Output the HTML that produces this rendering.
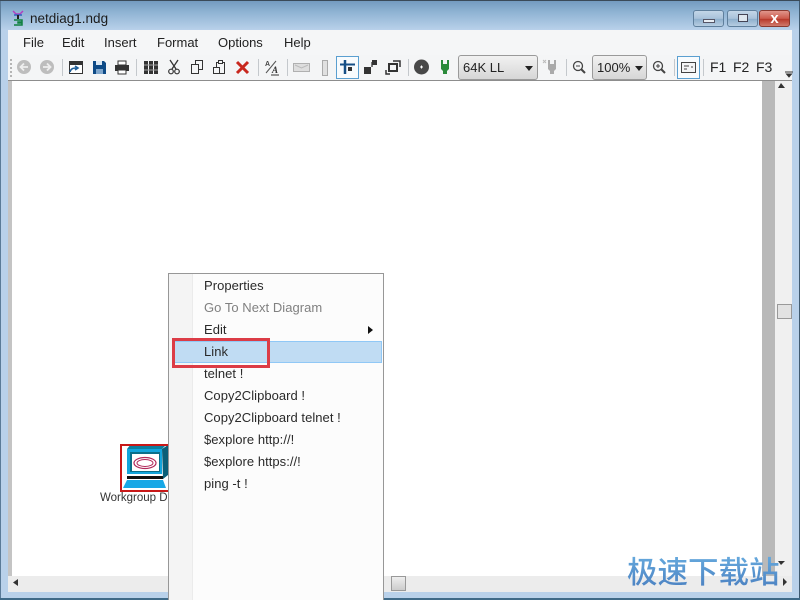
<!DOCTYPE html>
<html><head><meta charset="utf-8">
<style>
html,body{margin:0;padding:0;width:800px;height:600px;overflow:hidden;background:#b9d1ea}
body{position:relative;font-family:"Liberation Sans","Noto Sans CJK SC",sans-serif;color:#222}
div,span{position:absolute;box-sizing:border-box}
.t{white-space:nowrap;font-size:13px;line-height:16px}
.m{white-space:nowrap;font-size:13px;line-height:16px;left:204px;color:#2a2a2a;letter-spacing:.04px}
.btn{top:10px;height:17px;border:1px solid #5f7f9c;border-radius:3px;background:linear-gradient(#c3d6e8,#a9c2da 50%,#8fb0cd 55%,#b6cde2)}
</style></head><body>
<div style="left:0;top:0;width:800px;height:30px;background:linear-gradient(#7199bd,#8fb3d3 40%,#b9d1ea)"></div>
<div style="left:0;top:0;width:800px;height:1px;background:#3a4a58"></div>
<div style="left:0;top:1px;width:1px;height:599px;background:#5b7b98"></div>
<div style="left:799px;top:1px;width:1px;height:599px;background:#3f5a70"></div>
<div style="left:0;top:598px;width:800px;height:2px;background:#3f6a88"></div>
<div style="left:8px;top:30px;width:784px;height:25px;background:#f5f6f7"></div>
<div style="left:8px;top:55px;width:784px;height:26px;background:#f4f5f6"></div>
<div style="left:8px;top:80px;width:784px;height:1px;background:#8d8d8d"></div>
<div style="left:8px;top:81px;width:4px;height:495px;background:#c4c4c4"></div>
<div style="left:12px;top:81px;width:750px;height:495px;background:#fff"></div>
<div style="left:762px;top:81px;width:13px;height:495px;background:#b9b9b9"></div>
<div style="left:775px;top:81px;width:17px;height:495px;background:#f0f0f0"></div>
<div style="left:777px;top:304px;width:15px;height:15px;border:1px solid #999;background:#e2e2e2"></div>
<div style="left:8px;top:576px;width:784px;height:16px;background:#ececec"></div>
<div style="left:391px;top:576px;width:15px;height:15px;border:1px solid #999;background:linear-gradient(#eee,#ccc)"></div>

<svg style="position:absolute;left:0;top:0" width="800" height="600" viewBox="0 0 800 600">
<path d="M13 11l3 3h4l3-3" fill="none" stroke="#b040c0" stroke-width="1.500"/>
<path d="M14 15h8" stroke="#3060c0" stroke-width="1.500"/><path d="M18 15v4" stroke="#222" stroke-width="2"/>
<path d="M14 20h8v2h-4v1h4v2h-8" fill="none" stroke="#108040" stroke-width="1.500"/>
<path d="M11 59v18" stroke="#b5b5b5" stroke-width="2" stroke-dasharray="2 2"/>
<path d="M785 72h8M786.500 74h5l-2.500 3z" stroke="#333" fill="#333" stroke-width="1"/>
<circle cx="24" cy="67" r="7" fill="#bdbdbd"/><path d="M28 67h-7M24 63.500l-3.500 3.500 3.500 3.500" fill="none" stroke="#eee" stroke-width="1.800"/>
<circle cx="47" cy="67" r="7" fill="#bdbdbd"/><path d="M43 67h7M47 63.500l3.500 3.500-3.500 3.500" fill="none" stroke="#eee" stroke-width="1.800"/>
<path d="M62.500 59v17M136.500 59v17M258.500 59v17M287.500 59v17M408.500 59v17M566.500 59v17M674.500 59v17M703.500 59v17" stroke="#c4c8cc"/>
<rect x="69.500" y="61.500" width="13" height="12" fill="#fff" stroke="#333"/><path d="M69 62h14v3H69z" fill="#333"/>
<path d="M70 72c1-4 4-4 7-4M75 66l3 2-3 2" fill="none" stroke="#1f5f99" stroke-width="1.600"/>
<path d="M93 61h11l2 2v11H93z" fill="#0e4a86"/><rect x="96" y="61" width="6" height="4" fill="#dce8f3"/><rect x="96" y="69" width="7" height="5" fill="#7fa6cc"/>
<rect x="118" y="61" width="8" height="4" fill="#fff" stroke="#333"/><rect x="115" y="65" width="14" height="6" fill="#333"/><rect x="118" y="70" width="8" height="4" fill="#fff" stroke="#333"/>
<g fill="#333"><rect x="144" y="61" width="4" height="13"/><rect x="149" y="61" width="4" height="13"/><rect x="154" y="61" width="4" height="13"/></g>
<path d="M144 65h14M144 70h14" stroke="#a0a0a0"/>
<path d="M170 60l6 9M178 60l-6 9" stroke="#333" stroke-width="1.300" fill="none"/><circle cx="171" cy="71.500" r="2.300" fill="none" stroke="#333" stroke-width="1.200"/><circle cx="177" cy="71.500" r="2.300" fill="none" stroke="#333" stroke-width="1.200"/>
<rect x="195.500" y="60.500" width="7" height="9" fill="#f4f5f6" stroke="#333"/><rect x="191.500" y="64.500" width="7" height="9" fill="#f4f5f6" stroke="#333"/>
<rect x="216.500" y="62.500" width="8" height="11" fill="#f4f5f6" stroke="#333"/><rect x="218.500" y="60.500" width="4" height="3" fill="#f4f5f6" stroke="#333"/><rect x="213.500" y="67.500" width="6" height="6" fill="#f4f5f6" stroke="#333"/>
<path d="M237 62l11 11M248 62l-11 11" stroke="#c8281e" stroke-width="3"/>
<text x="265" y="66" font-size="7" font-family="Liberation Sans" font-weight="bold" fill="#444">A</text>
<text x="272" y="73" font-size="9" font-family="Liberation Serif" font-weight="bold" font-style="italic" fill="#333">A</text>
<path d="M266 73l10-12" stroke="#555"/><path d="M271 75h8" stroke="#333"/>
<rect x="293.500" y="63.500" width="16" height="8" fill="#dedede" stroke="#b0b0b0"/><path d="M295 65l6.500 3 6.500-3" fill="none" stroke="#bbb"/>
<rect x="322.500" y="60.500" width="5" height="15" fill="#e0e0e0" stroke="#aaa"/>
<rect x="336.500" y="56.500" width="22" height="22" fill="#f8fbfd" stroke="#5a9fd0"/>
<path d="M340 64.500h15" stroke="#164f86" stroke-width="2"/><path d="M345 60v14" stroke="#164f86" stroke-width="2.500"/><rect x="348" y="67" width="4" height="4" fill="#333"/>
<g fill="#333"><rect x="364" y="67" width="7" height="7"/><rect x="371" y="62" width="2" height="5" fill="#777"/><rect x="372" y="60" width="5" height="5"/></g>
<rect x="389" y="64" width="8" height="7" fill="none" stroke="#333" stroke-width="2"/><path d="M393 61h7v6" fill="none" stroke="#333" stroke-width="1.500"/><path d="M386 70v4h4" fill="none" stroke="#333" stroke-width="1.500"/>
<circle cx="421.500" cy="67" r="7.500" fill="#484848"/><path d="M420 67h3M421.500 65.500v3" stroke="#fff"/>
<path d="M442 60v4M448 60v4" stroke="#2a8a3a" stroke-width="2"/><path d="M441 64h8v5l-2 2v3h-4v-3l-2-2z" fill="#2a8a3a"/>
<path d="M549 60v4M555 60v4" stroke="#aaa" stroke-width="2"/><path d="M548 64h8v5l-2 2v3h-4v-3l-2-2z" fill="#aaa"/><path d="M543 60l3 3M546 60l-3 3" stroke="#bbb"/>
<circle cx="578" cy="66" r="4.500" fill="none" stroke="#444" stroke-width="1.300"/><path d="M576 66h4" stroke="#444"/><path d="M581 69l4 4" stroke="#444" stroke-width="2"/>
<circle cx="658" cy="66" r="4.500" fill="none" stroke="#444" stroke-width="1.300"/><path d="M656 66h4M658 64v4" stroke="#444"/><path d="M661 69l4 4" stroke="#444" stroke-width="2"/>
<rect x="677.500" y="56.500" width="22" height="22" fill="#f8fbfd" stroke="#5a9fd0"/>
<rect x="681.500" y="62.500" width="14" height="10" fill="#f4f5f6" stroke="#444"/><path d="M684 66h5M684 69h3M691 67h2" stroke="#444"/>
<path d="M781 83l-3 5h7z M18 579v7l-5-3.500z" fill="#333"/>
<path d="M781 565l-3-4h7z M783 578v8l4-4z" fill="#333"/>
<path d="M127 449h35l4-4v-1h-35z" fill="#0c7fa0"/>
<rect x="127" y="449" width="35" height="25" fill="#13a5dc"/>
<rect x="130" y="452" width="30" height="20" fill="#0a6f8a"/>
<rect x="132" y="454" width="27" height="17" fill="#fff"/>
<ellipse cx="145" cy="463" rx="11" ry="5.500" fill="none" stroke="#b0285a" stroke-width="1.200"/>
<ellipse cx="145" cy="463" rx="8" ry="3.500" fill="none" stroke="#b0285a" stroke-width="1"/>
<rect x="127" y="476" width="36" height="3" fill="#111"/>
<path d="M127 480h36l3 8h-43z" fill="#18a8e6"/>
<path d="M162 449l6-4v30l-5 4z" fill="#0a5f78"/>
</svg>

<div style="left:120px;top:444px;width:50px;height:48px;border:2px solid #c81818"></div>
<div class="t" style="left:100px;top:490px;font-size:11.500px;color:#333">Workgroup Di</div>

<div class="t" style="left:30px;top:11px;color:#1c1c1c;font-size:13.500px">netdiag1.ndg</div>
<div class="btn" style="left:693px;width:31px"><span style="left:9px;top:8px;width:12px;height:4px;background:#e8eef4;border:1px solid #556"></span></div>
<div class="btn" style="left:727px;width:31px"><span style="left:10px;top:3px;width:10px;height:8px;border:1px solid #445;background:#dde6ee"></span></div>
<div class="btn" style="left:759px;width:31px;border-color:#8a3a30;background:linear-gradient(#e0968c,#cc5a4c 50%,#b83a2c 55%,#d07a6c)"><span style="left:0;top:-1px;width:29px;text-align:center;color:#fff;font-size:15px;line-height:17px;font-weight:bold">x</span></div>

<div class="t" style="left:23px;top:35px">File</div>
<div class="t" style="left:62px;top:35px">Edit</div>
<div class="t" style="left:104px;top:35px">Insert</div>
<div class="t" style="left:157px;top:35px">Format</div>
<div class="t" style="left:218px;top:35px">Options</div>
<div class="t" style="left:284px;top:35px">Help</div>

<div style="left:458px;top:55px;width:80px;height:25px;border:1px solid #9a9a9a;border-radius:3px;background:linear-gradient(#f2f2f2,#d6d6d6)">
<span class="t" style="left:4px;top:4px;font-size:13px">64K LL</span>
<span style="left:66px;top:10px;border:4px solid transparent;border-top:5px solid #222"></span></div>
<div style="left:592px;top:55px;width:55px;height:25px;border:1px solid #9a9a9a;border-radius:3px;background:linear-gradient(#f2f2f2,#d6d6d6)">
<span class="t" style="left:4px;top:4px;font-size:13px">100%</span>
<span style="left:42px;top:10px;border:4px solid transparent;border-top:5px solid #222"></span></div>
<div class="t" style="left:710px;top:59px;font-size:14px">F1</div>
<div class="t" style="left:733px;top:59px;font-size:14px">F2</div>
<div class="t" style="left:756px;top:59px;font-size:14px">F3</div>

<div style="left:168px;top:273px;width:216px;height:327px;background:#fcfcfc;border:1px solid #979797;border-bottom:0"></div>
<div style="left:169px;top:274px;width:24px;height:326px;background:#f4f4f4;border-right:1px solid #ebebeb"></div>
<div style="left:172px;top:341px;width:210px;height:22px;background:#c0dcf3;border:1px solid #90c8f6"></div>
<div class="m" style="top:278px">Properties</div>
<div class="m" style="top:300px;color:#808080">Go To Next Diagram</div>
<div class="m" style="top:322px">Edit</div>
<div style="left:368px;top:326px;border:4px solid transparent;border-left:5px solid #111;border-right:0"></div>
<div class="m" style="top:344px">Link</div>
<div class="m" style="top:366px">telnet !</div>
<div class="m" style="top:388px">Copy2Clipboard !</div>
<div class="m" style="top:410px">Copy2Clipboard telnet !</div>
<div class="m" style="top:432px">$explore http://!</div>
<div class="m" style="top:454px">$explore https://!</div>
<div class="m" style="top:476px">ping -t !</div>
<div style="left:172px;top:338px;width:98px;height:30px;border:3px solid #dc3c46"></div>

<div style="left:627px;top:550px;white-space:nowrap;font-size:30.500px;line-height:40px;font-weight:500;font-family:'Noto Sans CJK SC',sans-serif;background:linear-gradient(#6ab0e2,#4a7fc0);-webkit-background-clip:text;background-clip:text;color:transparent">极速下载站</div>
</body></html>
